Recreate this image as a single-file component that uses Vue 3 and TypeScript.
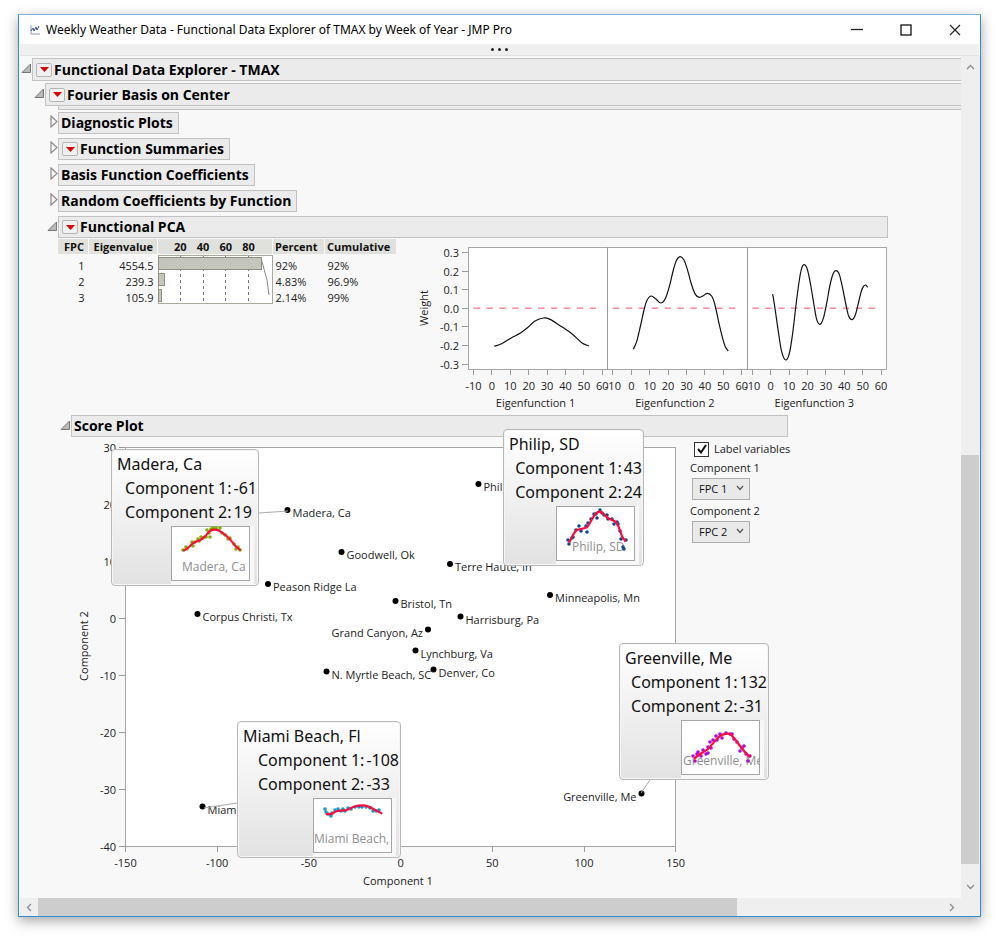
<script setup lang="ts">
import { ref } from 'vue'

type Pt = [number, number]

interface Outline {
  title: string
  menu: boolean
}

interface City {
  name: string
  x: number
  y: number
  side: 'left' | 'right'
}

interface Callout {
  name: string
  c1: string
  c2: string
  left: number
  top: number
  width: number
  color: string
  labelX: number
  labelY: number
  curve: Pt[]
  dots: Pt[]
}

/** Smooth path through the points (Catmull-Rom converted to cubic segments). */
function smooth(pts: Pt[]): string {
  let d = `M${pts[0][0]} ${pts[0][1]}`
  for (let i = 0; i < pts.length - 1; i++) {
    const p0 = pts[Math.max(0, i - 1)]
    const p1 = pts[i]
    const p2 = pts[i + 1]
    const p3 = pts[Math.min(pts.length - 1, i + 2)]
    const a = [p1[0] + (p2[0] - p0[0]) / 6, p1[1] + (p2[1] - p0[1]) / 6]
    const b = [p2[0] - (p3[0] - p1[0]) / 6, p2[1] - (p3[1] - p1[1]) / 6]
    d += `C${a[0].toFixed(2)} ${a[1].toFixed(2)} ${b[0].toFixed(2)} ${b[1].toFixed(2)} ${p2[0]} ${p2[1]}`
  }
  return d
}

const outlines: Outline[] = [
  { title: 'Diagnostic Plots', menu: false },
  { title: 'Function Summaries', menu: true },
  { title: 'Basis Function Coefficients', menu: false },
  { title: 'Random Coefficients by Function', menu: false },
]

const eigen = [
  { fpc: 1, value: '4554.5', percent: '92%', cumulative: '92%', bar: 103 },
  { fpc: 2, value: '239.3', percent: '4.83%', cumulative: '96.9%', bar: 6 },
  { fpc: 3, value: '105.9', percent: '2.14%', cumulative: '99%', bar: 3 },
]

const weights = ['0.3', '0.2', '0.1', '0.0', '-0.1', '-0.2', '-0.3']
const weeks = [-10, 0, 10, 20, 30, 40, 50, 60]

/* Curve points, measured in thirds of a pixel from one shared origin. */
const eigenCurves: { title: string; x: number; pts: Pt[] }[] = [
  {
    title: 'Eigenfunction 1',
    x: 0,
    pts: [[283, 349], [305, 341], [335, 323], [360, 310], [385, 291], [405, 273], [430, 264], [450, 268], [480, 287], [500, 300], [520, 315], [545, 338], [567, 348]],
  },
  {
    title: 'Eigenfunction 2',
    x: 1,
    pts: [[700, 357], [710, 335], [722, 285], [732, 240], [740, 213], [753, 198], [768, 207], [782, 219], [795, 208], [808, 170], [820, 120], [830, 90], [841, 80], [852, 90], [862, 118], [875, 165], [886, 193], [898, 202], [910, 197], [922, 190], [935, 198], [945, 225], [957, 280], [968, 325], [976, 350], [985, 363]],
  },
  {
    title: 'Eigenfunction 3',
    x: 2,
    pts: [[1118, 192], [1125, 235], [1135, 305], [1145, 365], [1157, 390], [1168, 370], [1178, 310], [1188, 225], [1198, 150], [1205, 115], [1213, 104], [1222, 118], [1232, 165], [1242, 225], [1250, 268], [1260, 283], [1270, 265], [1280, 220], [1290, 165], [1300, 130], [1309, 122], [1318, 133], [1328, 175], [1338, 225], [1346, 258], [1356, 269], [1366, 255], [1375, 220], [1383, 187], [1390, 170], [1397, 165], [1403, 172]],
  },
]

function eigenPath(pts: Pt[]): string {
  return smooth(pts.map(([x, y]) => [400 + x / 3, 230 + y / 3] as Pt))
}

const yTicks = [30, 20, 10, 0, -10, -20, -30, -40]
const xTicks = [-150, -100, -50, 0, 50, 100, 150]

const cities: City[] = [
  { name: 'Philip, SD', x: 478.5, y: 484, side: 'right' },
  { name: 'Madera, Ca', x: 287.5, y: 510, side: 'right' },
  { name: 'Goodwell, Ok', x: 341.5, y: 552, side: 'right' },
  { name: 'Terre Haute, In', x: 450, y: 564, side: 'right' },
  { name: 'Peason Ridge La', x: 268, y: 584, side: 'right' },
  { name: 'Minneapolis, Mn', x: 550, y: 595, side: 'right' },
  { name: 'Bristol, Tn', x: 395.5, y: 601, side: 'right' },
  { name: 'Corpus Christi, Tx', x: 197.5, y: 614, side: 'right' },
  { name: 'Harrisburg, Pa', x: 460.5, y: 616.5, side: 'right' },
  { name: 'Grand Canyon, Az', x: 428, y: 629.5, side: 'left' },
  { name: 'Lynchburg, Va', x: 415.5, y: 650.5, side: 'right' },
  { name: 'N. Myrtle Beach, SC', x: 326.5, y: 671.5, side: 'right' },
  { name: 'Denver, Co', x: 433.5, y: 669.5, side: 'right' },
  { name: 'Greenville, Me', x: 641.5, y: 793.5, side: 'left' },
  { name: 'Miami Beach, Fl', x: 202.5, y: 806.5, side: 'right' },
]

const callouts: Callout[] = [
  {
    name: 'Madera, Ca', c1: '-61', c2: '19', left: 37, top: 9, width: 148, color: '#7fb000', labelX: 11, labelY: 45,
    curve: [[12.3, 25], [18, 21], [22.3, 17], [29.7, 13.7], [34.7, 9.7], [39, 5], [44.7, 3.7], [49.7, 5.7], [58, 12.3], [64.7, 20.3], [69.7, 24.3]],
    dots: [[12, 24], [15, 21], [16, 23], [21, 16], [22, 20], [24, 16], [27, 13], [28, 15], [30, 11], [32, 12], [35, 11], [36, 4], [38, 7], [39, 11], [40, 3], [42, 2], [45, 2], [49, 2], [51, 7], [54, 9], [57, 13], [59, 12], [63, 18], [65, 23], [67, 21], [69, 24]],
  },
  {
    name: 'Philip, SD', c1: '43', c2: '24', left: 429, top: -11, width: 141, color: '#124a8f', labelX: 16, labelY: 45,
    curve: [[13, 36.7], [19.7, 25], [26.3, 22.7], [31.3, 20.7], [36.3, 12.7], [39.7, 7.7], [43.7, 5.7], [48, 8.3], [53, 12.7], [59.7, 16], [63, 21.7], [66.3, 30.7], [69.7, 35.7]],
    dots: [[12, 34], [13, 38], [16, 32], [17, 31], [20, 24], [23, 20], [25, 25], [30, 20], [31, 26], [32, 17], [35, 13], [38, 8], [40, 8], [41, 12], [44, 4], [46, 7], [48, 9], [51, 9], [52, 13], [56, 13], [58, 18], [61, 16], [62, 18], [64, 25], [65, 33], [67, 41], [68, 43], [70, 34]],
  },
  {
    name: 'Greenville, Me', c1: '132', c2: '-31', left: 545, top: 203, width: 150, color: '#a90be0', labelX: 2, labelY: 45,
    curve: [[13, 38.7], [20.7, 33], [27.3, 28.7], [34, 21], [39, 16], [45.7, 13.7], [50.7, 15.3], [57.3, 23.7], [64, 32], [69, 37]],
    dots: [[12, 36], [14, 41], [16, 34], [17, 32], [20, 36], [22, 30], [25, 34], [27, 33], [27, 27], [29, 22], [30, 28], [32, 20], [35, 16], [36, 20], [39, 14], [41, 18], [45, 13], [49, 14], [51, 14], [53, 19], [56, 22], [59, 31], [61, 28], [63, 26], [65, 34], [67, 41], [69, 36]],
  },
  {
    name: 'Miami Beach, Fl', c1: '-108', c2: '-33', left: 163, top: 281, width: 164, color: '#1497c4', labelX: 1, labelY: 45,
    curve: [[12.7, 16], [17.7, 16], [24.3, 13], [32.7, 12.3], [41, 8.7], [49.3, 7.3], [56, 8.7], [62.7, 12.3], [69.3, 15.7]],
    dots: [[12, 11], [13, 14], [15, 16], [18, 18], [19, 15], [22, 12], [25, 11], [28, 13], [30, 11], [32, 13], [35, 10], [38, 11], [42, 9], [46, 9], [49, 9], [53, 9], [57, 10], [60, 13], [63, 13], [66, 12]],
  },
]

const labelVariables = ref(true)
const component1 = ref('FPC 1')
const component2 = ref('FPC 2')
const components = ['FPC 1', 'FPC 2', 'FPC 3']
</script>

<template>
  <div class="desktop">
    <main class="window">
      <header class="titlebar">
        <svg class="app-icon" width="10" height="10" viewBox="0 0 10 10">
          <path d="M1 0V9H10" fill="none" stroke="#8a97bb" />
          <path d="M1 6L3 3L4 6L6 2L7 5L9 1" fill="none" stroke="#34508f" />
        </svg>
        <h1>Weekly Weather Data - Functional Data Explorer of TMAX by Week of Year - JMP Pro</h1>
        <button class="win-btn" type="button" aria-label="Minimize">
          <svg width="12" height="12" viewBox="0 0 12 12"><path d="M0 5.500H12" stroke="#222" stroke-width="1.300" /></svg>
        </button>
        <button class="win-btn" type="button" aria-label="Maximize">
          <svg width="12" height="12" viewBox="0 0 12 12"><rect x="1" y="1" width="10" height="10" fill="none" stroke="#111" stroke-width="1.300" /></svg>
        </button>
        <button class="win-btn" type="button" aria-label="Close">
          <svg width="12" height="12" viewBox="0 0 12 12"><path d="M1 1L11 11M11 1L1 11" stroke="#222" stroke-width="1.200" /></svg>
        </button>
      </header>

      <button class="toolstrip" type="button" aria-label="Show toolbar"><i></i><i></i><i></i></button>

      <div class="body">
        <div class="report">
          <div class="head">
            <button class="fold" type="button" aria-label="Collapse">
              <svg width="11" height="11" viewBox="0 0 11 11"><path d="M9.500 1V9.500H1Z" fill="#b9b9b9" stroke="#777" /></svg>
            </button>
            <div class="bar wide">
              <button class="menu" type="button" aria-label="Options"><svg width="9" height="5" viewBox="0 0 9 5"><path d="M0 0H9L4.500 5Z" fill="#d90000" /></svg></button>
              <h2>Functional Data Explorer - TMAX</h2>
            </div>
          </div>

          <section class="level">
            <div class="head">
              <button class="fold" type="button" aria-label="Collapse">
                <svg width="11" height="11" viewBox="0 0 11 11"><path d="M9.500 1V9.500H1Z" fill="#b9b9b9" stroke="#777" /></svg>
              </button>
              <div class="bar wide">
                <button class="menu" type="button" aria-label="Options"><svg width="9" height="5" viewBox="0 0 9 5"><path d="M0 0H9L4.500 5Z" fill="#d90000" /></svg></button>
                <h2>Fourier Basis on Center</h2>
              </div>
            </div>
            <div class="clipped"></div>

            <section class="level outlines">
              <div v-for="o in outlines" :key="o.title" class="head">
                <button class="fold closed" type="button" aria-label="Expand">
                  <svg width="8" height="13" viewBox="0 0 8 13"><path d="M1 1L7 6.500L1 12Z" fill="#fafafa" stroke="#8a8a8a" stroke-width="1.200" /></svg>
                </button>
                <div class="bar" :class="{ plain: !o.menu }">
                  <button v-if="o.menu" class="menu" type="button" aria-label="Options"><svg width="9" height="5" viewBox="0 0 9 5"><path d="M0 0H9L4.500 5Z" fill="#d90000" /></svg></button>
                  <h3>{{ o.title }}</h3>
                </div>
              </div>
              <div class="head">
                <button class="fold" type="button" aria-label="Collapse">
                  <svg width="11" height="11" viewBox="0 0 11 11"><path d="M9.500 1V9.500H1Z" fill="#b9b9b9" stroke="#777" /></svg>
                </button>
                <div class="bar pca">
                  <button class="menu" type="button" aria-label="Options"><svg width="9" height="5" viewBox="0 0 9 5"><path d="M0 0H9L4.500 5Z" fill="#d90000" /></svg></button>
                  <h3>Functional PCA</h3>
                </div>
              </div>
            </section>

            <div class="pca-body">
              <table class="eigen">
                <colgroup><col class="c-fpc" /><col class="c-val" /><col class="c-bar" /><col class="c-pct" /><col class="c-cum" /></colgroup>
                <thead>
                  <tr>
                    <th class="num">FPC</th>
                    <th class="num">Eigenvalue</th>
                    <th class="scale"><div><span>20</span><span>40</span><span>60</span><span>80</span></div></th>
                    <th>Percent</th>
                    <th>Cumulative</th>
                  </tr>
                </thead>
                <tbody>
                  <tr v-for="(row, i) in eigen" :key="row.fpc">
                    <td class="num">{{ row.fpc }}</td>
                    <td class="num">{{ row.value }}</td>
                    <td v-if="i === 0" class="pareto" rowspan="3">
                      <svg width="115" height="49" viewBox="0 0 115 49">
                        <rect x="0.5" y="0.5" width="114" height="48" fill="#fff" stroke="#a9aa9d" />
                        <path v-for="n in 4" :key="n" :d="`M${Math.floor(n * 22.5) + 0.5} 1V48`" stroke="#777" stroke-dasharray="3 3" />
                        <rect v-for="(r, k) in eigen" :key="k" x="0.5" :y="2.5 + k * 16" :width="r.bar" height="12" fill="#c4c5bb" stroke="#8f907f" />
                        <path d="M103.500 5L109 25L111 40" fill="none" stroke="#888" />
                      </svg>
                    </td>
                    <td>{{ row.percent }}</td>
                    <td>{{ row.cumulative }}</td>
                  </tr>
                </tbody>
              </table>

              <svg class="chart" width="475" height="172" viewBox="415 239 475 172">
                <rect x="468.5" y="247.5" width="418" height="122" fill="#fff" stroke="#a6a6a6" />
                <path d="M607.500 247V370M747.500 247V370" stroke="#999" />
                <g v-for="(w, i) in weights" :key="w">
                  <path :d="`M462 ${Math.round(252 + i * 18.6) + 0.5}H468`" stroke="#999" />
                  <text x="459" :y="257 + i * 18.6" text-anchor="end">{{ w }}</text>
                </g>
                <text transform="translate(428 308) rotate(-90)" text-anchor="middle">Weight</text>
                <g v-for="c in eigenCurves" :key="c.title">
                  <g v-for="(t, k) in weeks" :key="t">
                    <path :d="`M${Math.round(473 + c.x * 139.4 + k * 18.4) + 0.5} 370V375`" stroke="#999" />
                    <text :x="473.5 + c.x * 139.4 + k * 18.4" y="390" text-anchor="middle">{{ t }}</text>
                  </g>
                  <path :d="`M${473.5 + c.x * 139.4} 308.3H${597 + c.x * 139.4}`" stroke="#ff8a9e" stroke-width="1.400" stroke-dasharray="6.500 6.400" />
                  <path :d="eigenPath(c.pts)" fill="none" stroke="#111" stroke-width="1.200" />
                  <text :x="535.5 + c.x * 139.4" y="407" text-anchor="middle">{{ c.title }}</text>
                </g>
              </svg>
            </div>

            <section class="score">
              <div class="head">
                <button class="fold" type="button" aria-label="Collapse">
                  <svg width="11" height="11" viewBox="0 0 11 11"><path d="M9.500 1V9.500H1Z" fill="#b9b9b9" stroke="#777" /></svg>
                </button>
                <div class="bar plain plot"><h3>Score Plot</h3></div>
              </div>

              <div class="stage">
                <svg class="chart" width="616" height="450" viewBox="74 440 616 450">
                  <rect x="125.5" y="447.5" width="550" height="399" fill="#fff" stroke="#a6a6a6" />
                  <g v-for="(t, i) in yTicks" :key="'y' + t">
                    <path :d="`M119 ${447.5 + i * 57}H125`" stroke="#999" />
                    <text x="116" :y="452 + i * 57" text-anchor="end">{{ t }}</text>
                  </g>
                  <g v-for="(t, i) in xTicks" :key="'x' + t">
                    <path :d="`M${Math.round(125 + i * 91.7) + 0.5} 847V852`" stroke="#999" />
                    <text :x="125.5 + i * 91.7" y="867" text-anchor="middle">{{ t }}</text>
                  </g>
                  <text x="398" y="885" text-anchor="middle">Component 1</text>
                  <text transform="translate(88 646) rotate(-90)" text-anchor="middle">Component 2</text>
                  <g v-for="c in cities" :key="c.name">
                    <circle :cx="c.x" :cy="c.y" r="3" />
                    <text :x="c.side === 'right' ? c.x + 5 : c.x - 5" :y="c.y + 7" :text-anchor="c.side === 'right' ? 'start' : 'end'">{{ c.name }}</text>
                  </g>
                  <path d="M259 513L288 511M237 803L204 808M650 780L641 793" stroke="#aaa" />
                </svg>

                <form class="controls" @submit.prevent>
                  <label class="check">
                    <input v-model="labelVariables" type="checkbox" />
                    <svg class="tick" width="10" height="10" viewBox="0 0 10 10"><path d="M1 5L4 8.500L9 1" fill="none" stroke="#111" stroke-width="2" /></svg>
                    <span>Label variables</span>
                  </label>
                  <label for="comp1">Component 1</label>
                  <div class="pick">
                    <select id="comp1" v-model="component1"><option v-for="c in components" :key="c">{{ c }}</option></select>
                    <svg width="8" height="6" viewBox="0 0 8 6"><path d="M1 1L4 4.500L7 1" fill="none" stroke="#555" stroke-width="1.200" /></svg>
                  </div>
                  <label for="comp2">Component 2</label>
                  <div class="pick">
                    <select id="comp2" v-model="component2"><option v-for="c in components" :key="c">{{ c }}</option></select>
                    <svg width="8" height="6" viewBox="0 0 8 6"><path d="M1 1L4 4.500L7 1" fill="none" stroke="#555" stroke-width="1.200" /></svg>
                  </div>
                </form>

                <aside
                  v-for="c in callouts"
                  :key="c.name"
                  class="callout"
                  :style="{ left: c.left + 'px', top: c.top + 'px', width: c.width + 'px' }"
                >
                  <h4>{{ c.name }}</h4>
                  <dl>
                    <dt>Component 1:</dt><dd>{{ c.c1 }}</dd>
                    <dt>Component 2:</dt><dd>{{ c.c2 }}</dd>
                  </dl>
                  <div class="thumb">
                    <svg width="79" height="55" viewBox="0 0 79 55">
                      <rect x="0.5" y="0.5" width="78" height="54" fill="#fff" stroke="#a6a6a6" />
                      <text :x="c.labelX" :y="c.labelY">{{ c.name }}</text>
                      <circle v-for="(p, k) in c.dots" :key="k" :cx="p[0]" :cy="p[1]" r="1.8" :fill="c.color" />
                      <path :d="smooth(c.curve)" fill="none" stroke="#ff0a3c" stroke-width="2.200" />
                    </svg>
                  </div>
                </aside>
              </div>
            </section>
          </section>
        </div>

        <div class="vscroll">
          <button type="button" aria-label="Scroll up"><svg width="9" height="6" viewBox="0 0 9 6"><path d="M1 5L4.500 1.500L8 5" fill="none" stroke="#8c8c8c" stroke-width="1.300" /></svg></button>
          <div class="before"></div>
          <div class="thumbbar"></div>
          <div class="after"></div>
          <button type="button" aria-label="Scroll down"><svg width="9" height="6" viewBox="0 0 9 6"><path d="M1 1L4.500 4.500L8 1" fill="none" stroke="#8c8c8c" stroke-width="1.300" /></svg></button>
        </div>

        <div class="hscroll">
          <button type="button" aria-label="Scroll left"><svg width="6" height="9" viewBox="0 0 6 9"><path d="M5 1L1.500 4.500L5 8" fill="none" stroke="#8c8c8c" stroke-width="1.300" /></svg></button>
          <div class="thumbbar"></div>
          <div class="after"></div>
          <button type="button" aria-label="Scroll right"><svg width="6" height="9" viewBox="0 0 6 9"><path d="M1 1L4.500 4.500L1 8" fill="none" stroke="#8c8c8c" stroke-width="1.300" /></svg></button>
        </div>
        <div class="corner"></div>
      </div>
    </main>
  </div>
</template>

<style>
body {
  background: #fff;
}
</style>

<style scoped>
.desktop {
  box-sizing: border-box;
  display: flex;
  min-height: 100vh;
  padding: 14px 18px 22px;
  font-family: 'Open Sans', 'Noto Sans', sans-serif;
  font-size: 11px;
  line-height: 16px;
  color: #222;
}
.window {
  box-sizing: border-box;
  display: flex;
  flex: 1;
  flex-direction: column;
  min-width: 0;
  border: 1px solid #2f8ad8;
  border-top-color: #79b4e4;
  background: #fff;
  box-shadow: 0 4px 12px rgba(0, 0, 0, 0.35);
}
h1,
h2,
h3,
h4,
dl,
dd {
  margin: 0;
}
button {
  display: flex;
  align-items: center;
  justify-content: center;
  flex: none;
  padding: 0;
  border: 0;
  background: none;
}
svg {
  display: block;
}

.titlebar {
  display: flex;
  align-items: center;
  height: 29px;
  padding: 0 1px 0 11px;
}
.app-icon {
  flex: none;
}
.titlebar h1 {
  flex: 1;
  margin-left: 6px;
  font-family: 'Noto Sans', 'Open Sans', sans-serif;
  font-size: 12px;
  font-weight: 400;
  color: #000;
  white-space: nowrap;
}
.win-btn {
  width: 49px;
  height: 28px;
}
.toolstrip {
  gap: 4px;
  height: 12px;
  margin: 0 1px;
  border-bottom: 1px solid #e2e2e2;
  background: #efefef;
}
.toolstrip i {
  width: 3px;
  height: 3px;
  border-radius: 50%;
  background: #222;
}
.body {
  display: grid;
  flex: 1;
  grid-template-columns: minmax(0, 1fr) 19px;
  grid-template-rows: 1fr 18px;
  margin: 0 0 0 1px;
}
.report {
  overflow: hidden;
  padding: 2px 0 0 1px;
  background: #f8f8f8;
}

.head {
  display: flex;
  height: 23px;
}
.fold {
  align-items: flex-start;
  justify-content: flex-end;
  width: 11px;
  padding-top: 5px;
}
.fold.closed {
  padding-top: 3px;
}
.bar {
  box-sizing: border-box;
  display: flex;
  align-items: center;
  gap: 2px;
  padding: 0 5px 0 3px;
  border: 1px solid #c2c2c2;
  background: #ebebeb;
}
.bar.plain {
  padding-left: 2px;
}
.bar.wide {
  flex: 1;
  border-right: 0;
}
.bar.pca {
  width: 830px;
}
.bar.plot {
  width: 717px;
}
.bar h2,
.bar h3 {
  font-size: 14px;
  line-height: 20px;
  font-weight: 700;
  color: #000;
  white-space: nowrap;
}
.menu {
  box-sizing: border-box;
  width: 16px;
  height: 14px;
  border: 1px solid #b5b5b5;
  border-radius: 2px;
  background: #f1f1f1;
}
.level {
  padding: 2px 0 0 13px;
}
.clipped {
  box-sizing: border-box;
  height: 4px;
  margin-left: 24px;
  border: solid #c2c2c2;
  border-width: 0 0 1px 1px;
  background: #ebebeb;
}
.level.outlines {
  display: grid;
  gap: 4px;
  padding-top: 2px;
}
.outlines .head,
.score .head {
  height: 22px;
}

.pca-body {
  display: flex;
  gap: 19px;
  padding: 1px 0 0 23px;
}
.eigen {
  flex: none;
  align-self: flex-start;
  width: 338px;
  table-layout: fixed;
  border-collapse: collapse;
}
.c-fpc {
  width: 31px;
}
.c-val {
  width: 69px;
}
.c-bar {
  width: 115px;
}
.c-pct {
  width: 52px;
}
.c-cum {
  width: 71px;
}
.eigen th {
  height: 15px;
  padding: 0 0 0 2px;
  border-bottom: 1px solid #f8f8f8;
  border-left: 1px solid #fafafa;
  background: #e0e1dc;
  line-height: 15px;
  font-weight: 700;
  text-align: left;
  color: #111;
}
.eigen td {
  height: 16px;
  padding: 0 0 0 3px;
  line-height: 16px;
}
.eigen tbody tr:first-child td {
  padding-top: 3px;
}
.eigen .num {
  padding-right: 4px;
  text-align: right;
}
.eigen tbody tr:first-child .pareto {
  padding: 0;
  vertical-align: top;
}
.eigen .scale div {
  display: flex;
  padding: 0 12px 0 9px;
}
.eigen .scale span {
  flex: 1;
  text-align: center;
}
.chart {
  flex: none;
}
.chart text {
  font-size: 11px;
  fill: #222;
}

.score {
  padding: 4px 0 0 26px;
}
.stage {
  position: relative;
  display: flex;
  margin: 3px 0 0 14px;
}
.controls {
  display: flex;
  flex-direction: column;
  align-items: flex-start;
}
.check {
  display: grid;
  grid-template-columns: 15px auto;
  align-items: center;
  column-gap: 5px;
  margin: 1px 0 3px 4px;
}
.check input {
  grid-area: 1 / 1;
  width: 15px;
  height: 15px;
  margin: 0;
  border: 1px solid #333;
  background: #fff;
  appearance: none;
}
.check .tick {
  grid-area: 1 / 1;
  justify-self: center;
  visibility: hidden;
  pointer-events: none;
}
.check input:checked + .tick {
  visibility: visible;
}
.pick {
  display: grid;
  align-items: center;
  margin: 2px 0 3px 2px;
}
.pick select {
  grid-area: 1 / 1;
  width: 58px;
  height: 22px;
  padding: 0 0 0 6px;
  border: 1px solid #adadad;
  border-radius: 0;
  background: #e9e9e9;
  font: inherit;
  color: #111;
  appearance: none;
}
.pick svg {
  grid-area: 1 / 1;
  justify-self: end;
  margin: 0 6px 3px 0;
  pointer-events: none;
}

.callout {
  position: absolute;
  box-sizing: border-box;
  height: 137px;
  padding: 2px 0 0 5px;
  border: 1px solid #b9b9b9;
  border-radius: 4px;
  background: linear-gradient(#fff, #e2e2e2);
  box-shadow: inset 0 0 0 1px #f6f6f6;
  font-family: 'Noto Sans', 'Open Sans', sans-serif;
  font-size: 16px;
  line-height: 24px;
  color: #111;
}
.callout h4 {
  font-size: 16px;
  font-weight: 400;
}
.callout dl {
  display: grid;
  grid-template-columns: auto auto;
  justify-content: end;
  column-gap: 2px;
  padding-right: 1px;
  white-space: nowrap;
}
.thumb {
  width: 79px;
  margin: 2px 4px 0 auto;
  padding: 0 4px 3px 0;
  background: #f8f8f8;
}
.thumb text {
  font-family: 'Open Sans', 'Noto Sans', sans-serif;
  font-size: 12px;
  fill: #8e8e8e;
}

.vscroll,
.hscroll {
  display: flex;
  background: #efefef;
}
.vscroll {
  flex-direction: column;
  padding-right: 1px;
}
.vscroll button {
  height: 22px;
}
.vscroll .before {
  flex: 377;
}
.vscroll .thumbbar {
  flex: 410;
  background: #cdcdcd;
}
.vscroll .after {
  flex: 12;
}
.hscroll button {
  width: 18px;
}
.hscroll .thumbbar {
  flex: 699;
  background: #cdcdcd;
}
.hscroll .after {
  flex: 206;
}
.corner {
  background: #efefef;
}
</style>
